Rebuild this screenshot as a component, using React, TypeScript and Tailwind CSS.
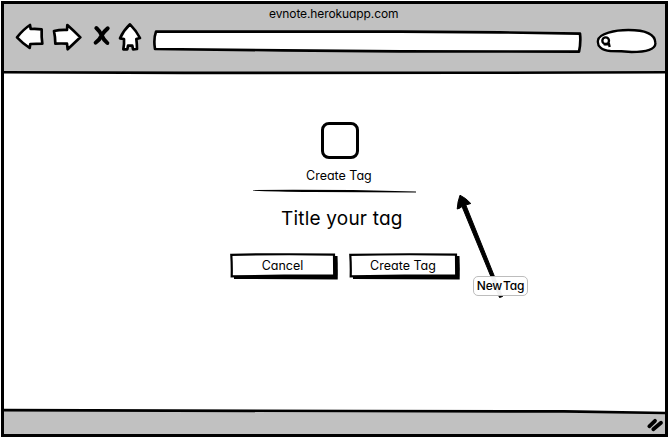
import type { ReactNode } from 'react';

const sketch = {
  fill: 'white',
  stroke: 'black',
  strokeWidth: 8,
  strokeLinejoin: 'round' as const,
  strokeLinecap: 'round' as const,
};

function Toolbar() {
  return (
    <div className="flex h-8 pl-[11px]">
      <svg aria-label="Back" className="h-8 w-[29px] shrink-0" viewBox="45 66 87 96">
        <path {...sketch} d="M51 112Q70 88 90 75L92 87Q110 86 125 88Q124 110 127 131L91 132L89 144Q69 131 51 112Z" />
      </svg>
      <svg aria-label="Forward" className="ml-2 h-8 w-[30px] shrink-0" viewBox="156 66 90 96">
        <path {...sketch} d="M162 93Q180 89 201 90L202 75Q220 91 241 112L203 148L201 131Q183 130 166 131Q166 112 162 93Z" />
      </svg>
      <svg aria-label="Stop" className="ml-2.5 h-8 w-[19px] shrink-0" viewBox="276 66 57 96">
        <path
          d="M289 84Q300 94 305 106Q311 121 322 129M323 85Q312 94 305 106Q298 121 287 128"
          fill="none"
          stroke="black"
          strokeWidth="12"
          strokeLinecap="round"
        />
      </svg>
      <svg aria-label="Home" className="ml-[7px] h-8 w-6 shrink-0" viewBox="354 66 72 96">
        <path {...sketch} d="M390 73Q408 91 420 114L409 117Q411 133 411 147L399 148L397 137H384L382 148L370 148Q373 132 372 117L360 115Q371 91 390 73Z" />
      </svg>
      <svg aria-label="Address" className="ml-[11px] h-8 w-[430px] shrink-0" viewBox="459 66 1290 96">
        <path {...sketch} d="M468 95L1200 95L1500 97L1740 101Q1743 128 1737 155L1200 154L850 151L465 147Q460 117 468 95Z" />
      </svg>
      <svg aria-label="Search" className="ml-3 h-8 w-[62px] shrink-0" viewBox="1785 66 186 96">
        <path {...sketch} strokeWidth={7} d="M1794 121C1797 100 1845 90 1885 90C1935 90 1965 101 1966 128C1969 148 1938 156 1895 156Q1865 153 1831 153C1805 151 1791 139 1794 121Z" />
        <circle cx="1817" cy="122" r="10" fill="none" stroke="black" strokeWidth="7" />
        <path d="M1811 133L1827 132L1829 141" fill="none" stroke="black" strokeWidth="7" />
      </svg>
    </div>
  );
}

function SketchButton({ children, width }: { children: ReactNode; width: number }) {
  return (
    <button
      className="relative flex h-[27px] items-start justify-center pr-[3px] pt-1 text-[12.5px] leading-[18px]"
      style={{ width }}
    >
      <svg className="absolute inset-0 h-full w-full" viewBox={`0 0 ${width} 27`}>
        <path d={`M4 3L${width - 0.5} 3Q${width} 15 ${width - 0.3} 26.5L4 26Z`} />
        <path
          d={`M1.3 1.8Q${width / 2} .8 ${width - 4} 1.6L${width - 3.8} 22.4L${width / 2} 22.5L1.7 23.4Q2 12 1.3 1.8Z`}
          fill="white"
          stroke="black"
          strokeWidth="2.2"
        />
      </svg>
      <span className="relative">{children}</span>
    </button>
  );
}

export default function App() {
  return (
    <div className="h-[438px] w-[669px] bg-white p-px font-['Inter',sans-serif] text-black [font-feature-settings:'cv11']">
      <div className="relative flex h-[436px] w-[667px] flex-col border-[3px] border-black">
        <header className="h-[67px] shrink-0 bg-[#c1c1c1]">
          <div className="h-[18px] pl-[265px] text-[12px] leading-[20px]">
            <span className="tracking-[-0.1px]">evnote.herokuapp.com</span>
          </div>
          <Toolbar />
        </header>
        <svg className="h-[4px] w-[661px] shrink-0 bg-white" viewBox="0 0 661 4">
          <path d="M0 0H661V1H0Z" fill="#c1c1c1" />
          <path d="M0 1.3L180 1.9L460 1.8L661 1.3" fill="none" stroke="black" strokeWidth="2.6" />
        </svg>

        <main className="flex grow flex-col pl-[226px]">
          <div className="ml-[91px] mt-[47px] h-[37px] w-[38px] rounded-[8px] border-[3px] border-black" />
          <div className="ml-[76px] mt-2 h-[17px] text-[12.5px] leading-[18px]">
            <span>Create Tag</span>
          </div>
          <svg className="ml-[23px] mt-[5px] h-[5px] w-[163px]" viewBox="0 0 163 5">
            <path d="M0 .9Q50 .7 100 1L163 2.4V3.6Q110 3.2 60 3Q20 2.5 0 1.6Z" />
          </svg>
          <div className="ml-[51px] mt-[13px] h-6 text-[19px] leading-6">
            <span className="tracking-[0.2px]">Title your tag</span>
          </div>
          <div className="mt-[22px] flex gap-[11px]">
            <SketchButton width={108}>Cancel</SketchButton>
            <SketchButton width={111}>Create Tag</SketchButton>
          </div>
        </main>

        <footer className="flex h-[26px] shrink-0 flex-col bg-[#c1c1c1]">
          <svg className="h-[26px] w-[661px]" viewBox="0 0 661 26">
            <path d="M0 0H661V4L350 2.5L0 2Z" fill="white" />
            <path d="M0 2.2L350 3L560 3.4L661 5" fill="none" stroke="black" strokeWidth="2.7" />
            <path
              d="M645.3 18.3L651 12.8M649.3 21.3L657 14.8"
              fill="none"
              stroke="black"
              strokeWidth="3.8"
              strokeLinecap="round"
            />
          </svg>
        </footer>

        <svg className="absolute left-[448px] top-[188px] h-[110px] w-[60px]" viewBox="452 192 60 110">
          <path
            d="M460 195.2Q457.5 202 457.2 209Q460 208.5 462 206.5L499.5 297.5L502.5 296.5L465.8 205L470.8 203.5Q466 198 460 195.2Z"
            stroke="black"
            strokeWidth="1"
            strokeLinejoin="round"
          />
        </svg>
        <div className="absolute left-[469px] top-[272px] flex h-5 w-[55px] items-center justify-center whitespace-nowrap rounded-[5px] border border-[#bdbdbd] bg-white/95 text-[12px]">
          <span className="font-medium tracking-[-0.2px] [word-spacing:-2px]">New Tag</span>
        </div>
      </div>
    </div>
  );
}
